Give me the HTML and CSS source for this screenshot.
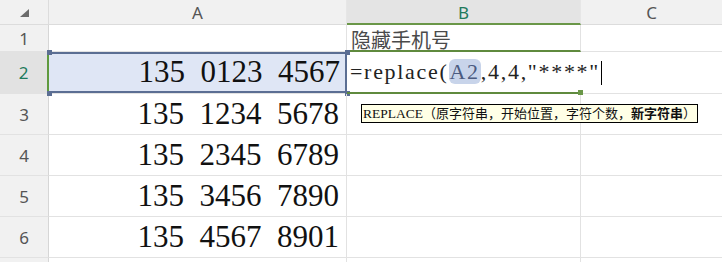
FILE: index.html
```html
<!DOCTYPE html>
<html>
<head>
<meta charset="utf-8">
<meta name="viewport" content="width=device-width, initial-scale=1.0">
<link rel="stylesheet" href="styles.css">
</head>
<body>
<div class="sheet">
	<div class="hd corner"><svg width="9" height="8" viewBox="0 0 9 8"><polygon points="9,0 9,8 0,8" fill="#6b6b6b"/></svg></div>
	<div class="hd col">A</div>
	<div class="hd col active">B</div>
	<div class="hd col last">C</div>

	<div class="hd row">1</div>
	<div class="cell"></div>
	<div class="cell label above-edit">隐藏手机号</div>
	<div class="cell last"></div>

	<div class="hd row active">2</div>
	<div class="cell num selected">135  0123  4567<i class="h tl"></i><i class="h tr"></i><i class="h bl"></i><i class="h br"></i></div>
	<div class="cell editing">=replace(<span class="ref">A2</span>,4,4,"****"<span class="caret"></span><i class="h gr"></i></div>
	<div class="cell last"></div>

	<div class="hd row">3</div>
	<div class="cell num">135  1234  5678</div>
	<div class="cell tipcell"><div class="tip"><span class="fn">REPLACE</span>（原字符串，开始位置，字符个数，<b>新字符串</b>）</div></div>
	<div class="cell last"></div>

	<div class="hd row">4</div>
	<div class="cell num">135  2345  6789</div>
	<div class="cell"></div>
	<div class="cell last"></div>

	<div class="hd row">5</div>
	<div class="cell num">135  3456  7890</div>
	<div class="cell"></div>
	<div class="cell last"></div>

	<div class="hd row">6</div>
	<div class="cell num">135  4567  8901</div>
	<div class="cell"></div>
	<div class="cell last"></div>

	<div class="hd row"></div>
	<div class="cell"></div>
	<div class="cell"></div>
	<div class="cell last"></div>
</div>
</body>
</html>
```

FILE: styles.css
```css
* {
	box-sizing: border-box;
}
body {
	margin: 0;
	background: #fff;
	overflow: hidden;
}
.sheet {
	display: grid;
	grid-template-columns: 49px 298px 234px 141px;
	grid-template-rows: 25px 27px 42px 41px 41px 41px 41px 10px;
	width: 722px;
	height: 262px;
}
.hd {
	background: #f1f1f1;
	color: #555;
	font-family: "Noto Sans", sans-serif;
	font-size: 17px;
	display: flex;
	align-items: center;
	justify-content: center;
}
.hd.col {
	border-bottom: 1px solid #dcdcdc;
	border-right: 1px solid #e6e6e6;
	padding-top: 1px;
}
.hd.col.last {
	border-right: none;
}
.hd.col.active {
	background: #e4e4e4;
	color: #1f7a5c;
	border-bottom: 2px solid #6a9748;
}
.hd.corner {
	border-bottom: 1px solid #dcdcdc;
	border-right: 1px solid #dcdcdc;
	justify-content: flex-start;
	align-items: flex-start;
	padding: 9px 0 0 20px;
}
.hd.row {
	border-right: 1px solid #d6d6d6;
	border-bottom: 1px solid #e2e2e2;
}
.hd.row.active {
	background: #e2e2e2;
	color: #1f7a5c;
	border-right: 2px solid #5f9a3e;
}
.cell {
	position: relative;
	border-right: 1px solid #e2e2e2;
	border-bottom: 1px solid #e2e2e2;
}
.cell.last {
	border-right: none;
}
.num {
	font-family: "Liberation Serif", serif;
	font-size: 31px;
	color: #111;
	white-space: pre;
	text-align: right;
	padding-right: 7px;
	line-height: 40px;
}
.label {
	font-family: "Noto Sans CJK SC", sans-serif;
	font-size: 20px;
	color: #4a4a4a;
	padding: 3px 0 0 4px;
	line-height: 24px;
}
.above-edit {
	border-bottom: 2px solid #5f8a3e;
}
.selected {
	background: #dfe6f5;
	border-right: none;
	box-shadow: inset 0 2px 0 #5b6e93, inset -2px 0 0 #5b6e93, inset 0 -2px 0 #5b6e93;
}
.h {
	position: absolute;
	width: 5px;
	height: 5px;
	background: #5b6e93;
}
.tl { left: -2px; top: -2px; }
.tr { right: -3px; top: -2px; }
.bl { left: -2px; bottom: -3px; }
.br { right: -3px; bottom: -3px; }
.editing {
	font-family: "Liberation Serif", serif;
	font-size: 22px;
	letter-spacing: 1.7px;
	color: #222;
	white-space: pre;
	border-right: none;
	border-bottom: 2px solid #5f8a3e;
	padding-left: 3px;
	line-height: 40px;
	z-index: 1;
}
.h.gr {
	background: #6a9748;
	right: -2px;
	bottom: -3px;
}
.ref {
	background: #c8d4ea;
	color: #4b5b80;
	border-radius: 6px;
	padding: 0 1px;
}
.caret {
	display: inline-block;
	width: 1px;
	height: 24px;
	background: #000;
	margin-left: 1px;
	vertical-align: -6px;
}
.tip {
	position: absolute;
	left: 14px;
	top: 10px;
	background: #ffffe6;
	border: 1px solid #000;
	font-family: "Noto Sans CJK SC", sans-serif;
	font-size: 13px;
	line-height: 16px;
	color: #111;
	white-space: nowrap;
	padding: 0 1px;
	z-index: 2;
}
.tip .fn {
	font-family: "Liberation Serif", serif;
	font-size: 13.5px;
}
```
